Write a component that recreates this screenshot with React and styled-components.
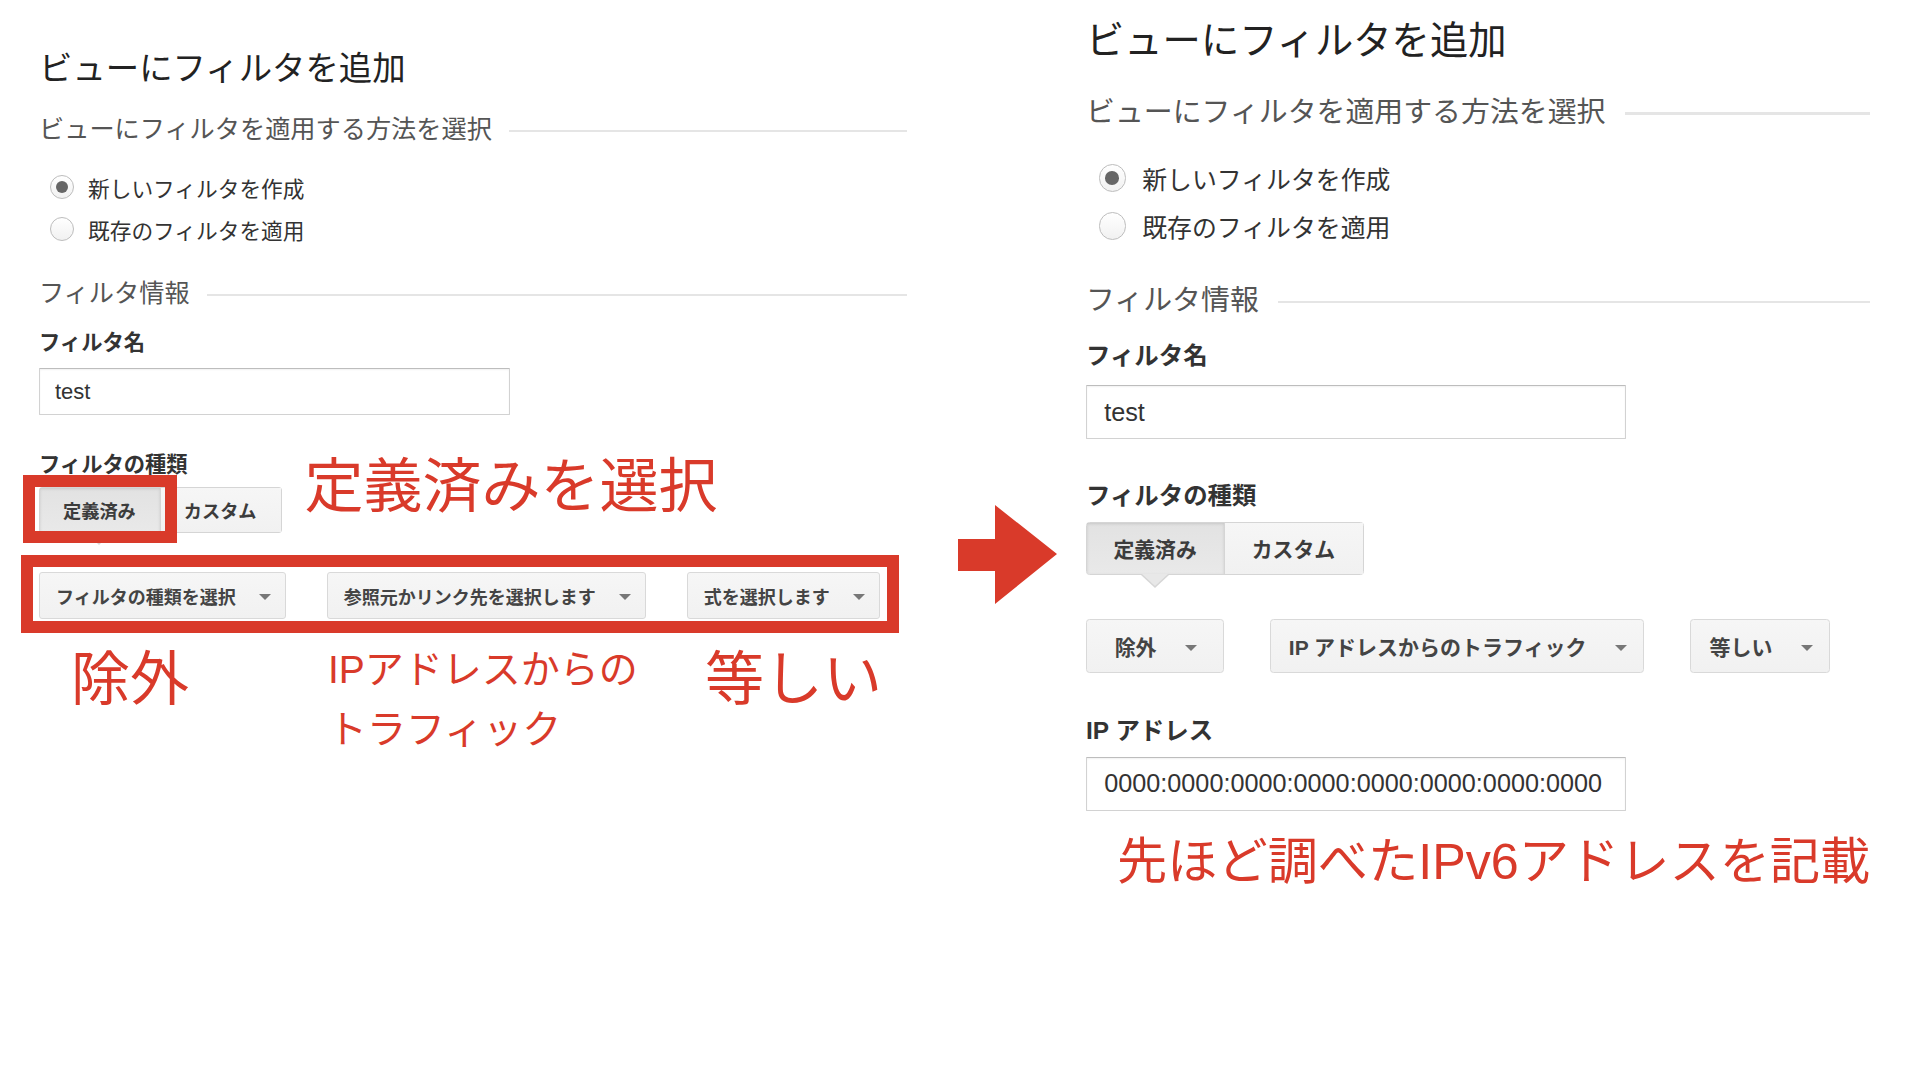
import React from "react";
import styled, { createGlobalStyle } from "styled-components";

const u = (n) => `calc(${n}px * var(--s))`;
const RED = "#d93a2a";
const FONT = `"Liberation Sans", "Noto Sans CJK JP", sans-serif`;

const Global = createGlobalStyle`
  html, body { margin: 0; padding: 0; background: #fff; }
  body { font-family: ${FONT}; width: 1920px; height: 1080px; overflow: hidden; }
  * { box-sizing: border-box; }
`;

const Page = styled.div`
  display: flex;
  align-items: flex-start;
  width: 1920px;
  height: 1080px;
  background: #fff;
`;

const Panel = styled.section`
  --s: ${(p) => p.$s};
  display: flex;
  flex-direction: column;
  width: ${(p) => p.$w}px;
  margin-left: ${(p) => p.$ml}px;
  padding-top: ${(p) => p.$pt}px;
  flex: none;
`;

const Title = styled.h1`
  margin: 0;
  height: ${u(40)};
  display: flex;
  align-items: center;
  font-size: ${u(33.4)};
  font-weight: 400;
  color: #222;
  white-space: nowrap;
`;

const SectionHead = styled.h2`
  margin: ${(p) => u(p.$mt)} 0 0;
  height: ${u(36)};
  display: flex;
  align-items: center;
  font-size: ${u(25.2)};
  font-weight: 400;
  color: #555;
  white-space: nowrap;
  &::after {
    content: "";
    flex: 1;
    height: ${u(2)};
    background: #e5e5e5;
    margin-left: ${u(17)};
    margin-top: ${u(8)};
  }
`;

const RadioList = styled.div`
  display: flex;
  flex-direction: column;
  gap: ${u(8)};
  margin-top: ${u(25)};
`;

const RadioRow = styled.label`
  height: ${u(34)};
  display: flex;
  align-items: center;
  gap: ${u(14)};
  padding-left: ${u(11)};
  font-size: ${u(21.7)};
  color: #333;
  white-space: nowrap;
`;

const RadioCircle = styled.span`
  width: ${u(24)};
  height: ${u(24)};
  border-radius: 50%;
  border: ${u(1.6)} solid #bdbdbd;
  background: linear-gradient(#fff, #f1f1f1);
  display: flex;
  align-items: center;
  justify-content: center;
  flex: none;
  &::after {
    content: "";
    display: ${(p) => (p.$on ? "block" : "none")};
    width: ${u(12)};
    height: ${u(12)};
    border-radius: 50%;
    background: #666;
  }
`;

const FieldLabel = styled.div`
  margin-top: ${(p) => u(p.$mt)};
  height: ${u(30)};
  display: flex;
  align-items: center;
  font-size: ${u(21.3)};
  font-weight: 700;
  color: #333;
  white-space: nowrap;
`;

const TextField = styled.input`
  margin-top: ${(p) => u(p.$mt || 13)};
  width: ${u(471)};
  height: ${u(47)};
  border: 1px solid #d2d2d2;
  border-top-color: #bdbdbd;
  border-radius: 1px;
  box-shadow: inset 0 1px 2px rgba(0, 0, 0, 0.06);
  padding: 0 ${u(15)};
  font-family: ${FONT};
  font-size: ${u(22)};
  color: #333;
  background: #fff;
  outline: none;
`;

const ToggleRow = styled.div`
  margin-top: ${u(10)};
  height: ${u(46)};
  display: flex;
  align-items: center;
`;

const ToggleGroup = styled.div`
  display: flex;
  height: 100%;
  border: 1px solid #d5d5d5;
  border-radius: ${u(3)};
  flex: none;
`;

const ToggleBtn = styled.div`
  position: relative;
  display: flex;
  align-items: center;
  padding: 0 ${u(24)} 0 ${u(23)};
  font-size: ${u(18.2)};
  font-weight: 700;
  color: #3c3c3c;
  white-space: nowrap;
  background: ${(p) => (p.$on ? "linear-gradient(#e2e2e2, #e9e9e9)" : "linear-gradient(#f6f6f6, #f1f1f1)")};
  box-shadow: ${(p) => (p.$on ? "inset 0 1px 3px rgba(0,0,0,0.12)" : "none")};
  border-right: ${(p) => (p.$on ? "1px solid #d5d5d5" : "none")};
  &::before,
  &::after {
    content: "";
    display: ${(p) => (p.$on ? "block" : "none")};
    position: absolute;
    left: 50%;
    width: 0;
    height: 0;
    border-style: solid;
    border-color: transparent;
  }
  &::before {
    top: calc(100% + 1px);
    margin-left: ${u(-12.5)};
    border-width: ${u(12)} ${u(12.5)} 0;
    border-top-color: #d6d6d6;
  }
  &::after {
    top: 100%;
    margin-left: ${u(-11.5)};
    border-width: ${u(11)} ${u(11.5)} 0;
    border-top-color: #e8e8e8;
  }
`;

const DropRow = styled.div`
  position: relative;
  width: fit-content;
  margin-top: ${u(39)};
  height: ${u(47)};
  display: flex;
  gap: ${(p) => u(p.$gap)};
`;

const Dropdown = styled.div`
  display: flex;
  align-items: center;
  justify-content: center;
  gap: ${(p) => u(p.$tight ? 23 : 25)};
  min-width: ${u(120)};
  height: 100%;
  padding: 0 ${u(14)} 0 ${u(16)};
  border: 1px solid #d9d9d9;
  border-radius: ${u(3)};
  background: linear-gradient(#f6f6f6, #f1f1f1);
  font-size: ${(p) => u(p.$tight ? 18 : 18.3)};
  font-weight: 700;
  color: #444;
  white-space: nowrap;
`;

const Caret = styled.span`
  width: 0;
  height: 0;
  margin-top: ${u(3)};
  border-left: ${u(6)} solid transparent;
  border-right: ${u(6)} solid transparent;
  border-top: ${u(6)} solid #777;
`;

const AnnoBox = styled.span`
  position: absolute;
  z-index: 3;
  top: ${(p) => p.$t}px;
  left: ${(p) => p.$l}px;
  right: ${(p) => p.$r}px;
  bottom: ${(p) => p.$b}px;
  border: 12px solid ${RED};
  pointer-events: none;
`;

const AnnoTitle = styled.div`
  margin-left: 23px;
  margin-bottom: 46px;
  font-size: 59px;
  line-height: 60px;
  color: ${RED};
  white-space: nowrap;
`;

const AnnoGrid = styled.div`
  margin-top: 21px;
  display: grid;
  grid-template-columns: 257px 377px auto;
  padding-left: 32px;
  align-items: start;
`;

const AnnoBig = styled.div`
  margin-top: 8px;
  font-size: 59px;
  line-height: 64px;
  color: ${RED};
  white-space: nowrap;
`;

const AnnoLines = styled.div`
  font-size: 39px;
  line-height: 60px;
  color: ${RED};
  white-space: nowrap;
`;

const Note = styled.div`
  margin-top: ${u(15)};
  margin-left: ${u(27)};
  height: ${u(50)};
  display: flex;
  align-items: center;
  font-size: ${u(43.8)};
  color: ${RED};
  white-space: nowrap;
`;

const ArrowWrap = styled.div`
  flex: none;
  margin-left: 51px;
  margin-top: 505px;
  width: 100px;
  height: 100px;
  display: flex;
`;

function Arrow() {
  return (
    <ArrowWrap>
      <svg width="100" height="100" viewBox="0 0 100 100">
        <polygon points="0,34 37,34 37,0 99,49 37,99 37,66 0,66" fill={RED} />
      </svg>
    </ArrowWrap>
  );
}

function CommonTop() {
  return (
    <>
      <Title>ビューにフィルタを追加</Title>
      <SectionHead $mt={24}>ビューにフィルタを適用する方法を選択</SectionHead>
      <RadioList>
        <RadioRow>
          <RadioCircle $on />
          新しいフィルタを作成
        </RadioRow>
        <RadioRow>
          <RadioCircle />
          既存のフィルタを適用
        </RadioRow>
      </RadioList>
      <SectionHead $mt={27}>フィルタ情報</SectionHead>
      <FieldLabel $mt={16}>フィルタ名</FieldLabel>
      <TextField readOnly value="test" />
      <FieldLabel $mt={32}>フィルタの種類</FieldLabel>
    </>
  );
}

export default function App() {
  return (
    <>
      <Global />
      <Page>
        <Panel $s={1} $w={868} $ml={39} $pt={45}>
          <CommonTop />
          <ToggleRow>
            <ToggleGroup>
              <ToggleBtn $on>
                定義済み
                <AnnoBox $t={-13} $l={-17} $r={-17} $b={-11} />
              </ToggleBtn>
              <ToggleBtn>カスタム</ToggleBtn>
            </ToggleGroup>
            <AnnoTitle>定義済みを選択</AnnoTitle>
          </ToggleRow>
          <DropRow $gap={41}>
            <Dropdown $tight>
              フィルタの種類を選択
              <Caret />
            </Dropdown>
            <Dropdown $tight>
              参照元かリンク先を選択します
              <Caret />
            </Dropdown>
            <Dropdown $tight>
              式を選択します
              <Caret />
            </Dropdown>
            <AnnoBox $t={-17} $l={-18} $r={-19} $b={-14} />
          </DropRow>
          <AnnoGrid>
            <AnnoBig>除外</AnnoBig>
            <AnnoLines>
              IPアドレスからの
              <br />
              トラフィック
            </AnnoLines>
            <AnnoBig>等しい</AnnoBig>
          </AnnoGrid>
        </Panel>
        <Arrow />
        <Panel $s={1.147} $w={784} $ml={28} $pt={15}>
          <CommonTop />
          <ToggleRow>
            <ToggleGroup>
              <ToggleBtn $on>定義済み</ToggleBtn>
              <ToggleBtn>カスタム</ToggleBtn>
            </ToggleGroup>
          </ToggleRow>
          <DropRow $gap={40}>
            <Dropdown>
              除外
              <Caret />
            </Dropdown>
            <Dropdown>
              IP アドレスからのトラフィック
              <Caret />
            </Dropdown>
            <Dropdown>
              等しい
              <Caret />
            </Dropdown>
          </DropRow>
          <FieldLabel $mt={33}>IP アドレス</FieldLabel>
          <TextField $mt={10} readOnly value="0000:0000:0000:0000:0000:0000:0000:0000" />
          <Note>先ほど調べたIPv6アドレスを記載</Note>
        </Panel>
      </Page>
    </>
  );
}
